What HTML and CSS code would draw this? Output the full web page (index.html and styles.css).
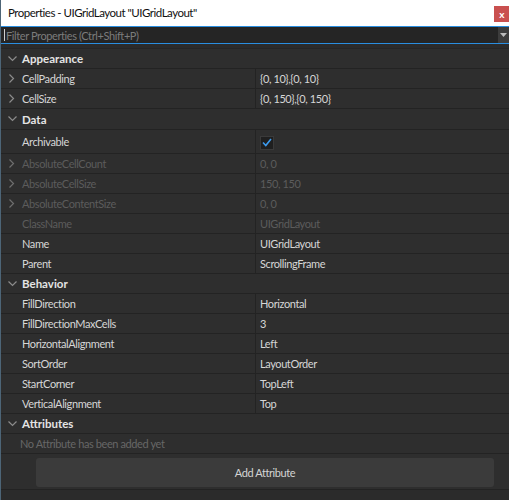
FILE: index.html
```html
<!DOCTYPE html>
<html lang="en">
<head>
  <meta charset="UTF-8" />
  <title>Properties</title>
  <link rel="stylesheet" href="styles.css">
</head>
<body>
  <div class="window">
    <div class="titlebar">
      <span class="title">Properties - UIGridLayout "UIGridLayout"</span>
      <span class="close">x</span>
    </div>

    <div class="filter">
      <span class="caret"></span>
      <span class="placeholder">Filter Properties (Ctrl+Shift+P)</span>
      <span class="dropdown">
        <svg width="7" height="4" viewBox="0 0 7 4"><path d="M0 0H7L3.5 4Z" fill="#bbb"/></svg>
      </span>
    </div>

    <div class="props">
      <div class="row header">
        <span class="chev"><svg width="9" height="6" viewBox="0 0 9 6"><path d="M0.5 0.5L4.5 4.5L8.5 0.5" fill="none" stroke="#8c8c8c" stroke-width="1.2"/></svg></span>
        <span class="name">Appearance</span>
      </div>
      <div class="row">
        <span class="chev"><svg width="6" height="9" viewBox="0 0 6 9"><path d="M0.5 0.5L4.5 4.5L0.5 8.5" fill="none" stroke="#8c8c8c" stroke-width="1.2"/></svg></span>
        <span class="name">CellPadding</span>
        <span class="value">{0, 10},{0, 10}</span>
      </div>
      <div class="row">
        <span class="chev"><svg width="6" height="9" viewBox="0 0 6 9"><path d="M0.5 0.5L4.5 4.5L0.5 8.5" fill="none" stroke="#8c8c8c" stroke-width="1.2"/></svg></span>
        <span class="name">CellSize</span>
        <span class="value">{0, 150},{0, 150}</span>
      </div>

      <div class="row header tall">
        <span class="chev"><svg width="9" height="6" viewBox="0 0 9 6"><path d="M0.5 0.5L4.5 4.5L8.5 0.5" fill="none" stroke="#8c8c8c" stroke-width="1.2"/></svg></span>
        <span class="name">Data</span>
      </div>
      <div class="row check-row">
        <span class="chev"></span>
        <span class="name">Archivable</span>
        <span class="value"><span class="check"><svg width="10" height="9" viewBox="0 0 10 9"><path d="M1 4.5L3.8 7.5L9 1" fill="none" stroke="#3d9cf0" stroke-width="1.6"/></svg></span></span>
      </div>
      <div class="row disabled">
        <span class="chev"><svg width="6" height="9" viewBox="0 0 6 9"><path d="M0.5 0.5L4.5 4.5L0.5 8.5" fill="none" stroke="#6e6e6e" stroke-width="1.2"/></svg></span>
        <span class="name">AbsoluteCellCount</span>
        <span class="value">0, 0</span>
      </div>
      <div class="row disabled">
        <span class="chev"><svg width="6" height="9" viewBox="0 0 6 9"><path d="M0.5 0.5L4.5 4.5L0.5 8.5" fill="none" stroke="#6e6e6e" stroke-width="1.2"/></svg></span>
        <span class="name">AbsoluteCellSize</span>
        <span class="value">150, 150</span>
      </div>
      <div class="row disabled">
        <span class="chev"><svg width="6" height="9" viewBox="0 0 6 9"><path d="M0.5 0.5L4.5 4.5L0.5 8.5" fill="none" stroke="#6e6e6e" stroke-width="1.2"/></svg></span>
        <span class="name">AbsoluteContentSize</span>
        <span class="value">0, 0</span>
      </div>
      <div class="row disabled">
        <span class="chev"></span>
        <span class="name">ClassName</span>
        <span class="value">UIGridLayout</span>
      </div>
      <div class="row">
        <span class="chev"></span>
        <span class="name">Name</span>
        <span class="value">UIGridLayout</span>
      </div>
      <div class="row">
        <span class="chev"></span>
        <span class="name">Parent</span>
        <span class="value">ScrollingFrame</span>
      </div>

      <div class="row header">
        <span class="chev"><svg width="9" height="6" viewBox="0 0 9 6"><path d="M0.5 0.5L4.5 4.5L8.5 0.5" fill="none" stroke="#8c8c8c" stroke-width="1.2"/></svg></span>
        <span class="name">Behavior</span>
      </div>
      <div class="row">
        <span class="chev"></span>
        <span class="name">FillDirection</span>
        <span class="value">Horizontal</span>
      </div>
      <div class="row">
        <span class="chev"></span>
        <span class="name">FillDirectionMaxCells</span>
        <span class="value">3</span>
      </div>
      <div class="row">
        <span class="chev"></span>
        <span class="name">HorizontalAlignment</span>
        <span class="value">Left</span>
      </div>
      <div class="row">
        <span class="chev"></span>
        <span class="name">SortOrder</span>
        <span class="value">LayoutOrder</span>
      </div>
      <div class="row">
        <span class="chev"></span>
        <span class="name">StartCorner</span>
        <span class="value">TopLeft</span>
      </div>
      <div class="row">
        <span class="chev"></span>
        <span class="name">VerticalAlignment</span>
        <span class="value">Top</span>
      </div>

      <div class="row header">
        <span class="chev"><svg width="9" height="6" viewBox="0 0 9 6"><path d="M0.5 0.5L4.5 4.5L8.5 0.5" fill="none" stroke="#8c8c8c" stroke-width="1.2"/></svg></span>
        <span class="name">Attributes</span>
      </div>
      <div class="row note">No Attribute has been added yet</div>
      <div class="add-row">
        <div class="add-button">Add Attribute</div>
      </div>
    </div>
  </div>
</body>
</html>
```

FILE: styles.css
```css
body {
  margin: 0;
  background: #2b2b2b;
  font-family: Lato, "Open Sans", sans-serif;
}
.window {
  border-left: 1px solid #4d6577;
  min-height: 500px;
  box-sizing: border-box;
}
.titlebar {
  height: 26px;
  background: #ffffff;
  display: flex;
  align-items: center;
  justify-content: space-between;
  font-size: 11.5px;
  letter-spacing: -0.5px;
  color: #111;
}
.title {
  padding-left: 7px;
  margin-top: -1px;
}
.close {
  width: 15px;
  height: 16px;
  background: #c9504f;
  color: #fff;
  font-weight: bold;
  font-size: 10px;
  display: flex;
  align-items: center;
  justify-content: center;
  margin-top: 1px;
}
.filter {
  height: 16px;
  border-top: 1px solid #2a8ee0;
  border-bottom: 1px solid #2a8ee0;
  background: #252525;
  display: flex;
  align-items: center;
  font-size: 11px;
  letter-spacing: -0.4px;
}
.caret {
  width: 1px;
  height: 12px;
  background: #cfcfcf;
  margin: 0 1px 0 3px;
}
.placeholder {
  color: #7c7c7c;
  flex: 1;
}
.dropdown {
  width: 11px;
  height: 16px;
  background: #3c3c3c;
  display: flex;
  align-items: center;
  justify-content: center;
}
.props {
  margin-top: 4px;
  border-top: 1px solid #262626;
}
.row {
  height: 20px;
  box-sizing: border-box;
  display: flex;
  align-items: center;
  background: #2e2e2e;
  border-bottom: 1px solid #232323;
  font-size: 11px;
  letter-spacing: -0.4px;
  color: #d6d6d6;
}
.row.tall {
  height: 21px;
}
.row.check-row {
  height: 24px;
}
.chev {
  width: 21px;
  display: flex;
  align-items: center;
  justify-content: center;
  padding-left: 1px;
  box-sizing: border-box;
}
.name {
  width: 233px;
  align-self: stretch;
  display: flex;
  align-items: center;
  border-right: 1px solid #232323;
}
.value {
  padding-left: 4px;
}
.header {
  font-size: 11.5px;
  letter-spacing: 0;
}
.header .name {
  border-right: none;
  font-weight: bold;
  color: #e4e4e4;
}
.disabled {
  color: #5c5c5c;
}
.check {
  width: 12px;
  height: 12px;
  background: #1f1f1f;
  border: 1px solid #3a3a3a;
  display: flex;
  align-items: center;
  justify-content: center;
  margin: 2px 0 0 0;
}
.note {
  padding-left: 19px;
  color: #676767;
}
.add-row {
  padding: 4px 15px 2px 35px;
  background: #2e2e2e;
  border-bottom: 1px solid #232323;
}
.add-button {
  height: 29px;
  background: #3b3b3b;
  border-radius: 3px;
  display: flex;
  align-items: center;
  justify-content: center;
  font-size: 11px;
  letter-spacing: -0.4px;
  color: #d4d4d4;
}
```
